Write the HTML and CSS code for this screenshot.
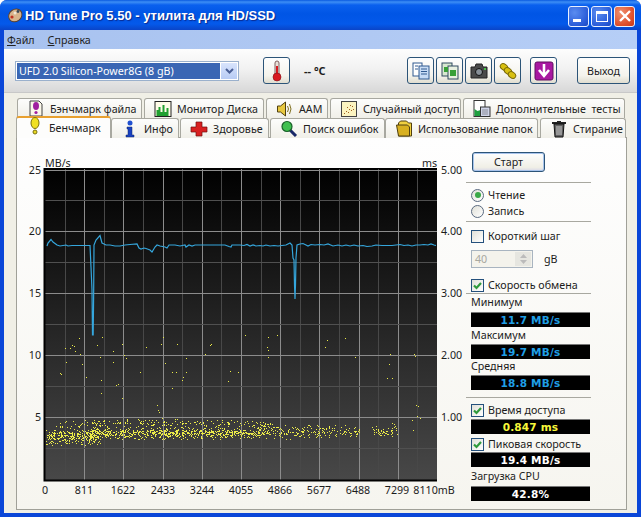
FILE: index.html
```html
<!DOCTYPE html>
<html lang="ru">
<head>
<meta charset="utf-8">
<title>HD Tune Pro 5.50</title>
<link rel="stylesheet" href="styles.css">
</head>
<body>
<div class="window">
  <header class="titlebar">
    <svg class="app-icon" width="16" height="16" viewBox="0 0 16 16"><ellipse cx="8" cy="8.5" rx="7" ry="6" fill="#d8b48c" stroke="#5a4030" transform="rotate(-35 8 8)"/><circle cx="5" cy="10" r="1.6" fill="#c03020"/><circle cx="8" cy="6" r="1.5" fill="#f0e8d8"/><circle cx="11" cy="4.5" r="1.4" fill="#384858"/></svg>
    <span class="title">HD Tune Pro 5.50 - утилита для HD/SSD</span>
    <div class="caption-btns">
      <span class="cap cap-min"><i class="cap-dash"></i></span>
      <span class="cap cap-max"><i class="cap-box"></i></span>
      <span class="cap cap-close"><svg width="14" height="14" viewBox="0 0 14 14"><path d="M2 2l10 10M12 2L2 12" stroke="#fff" stroke-width="2.4"/></svg></span>
    </div>
  </header>
  <div class="client">
    <nav class="menu"><span class="menu-item"><u>Ф</u>айл</span><span class="menu-item"><u>С</u>правка</span></nav>
    <div class="toolbar">
      <div class="combo"><span class="combo-value">UFD 2.0 Silicon-Power8G (8 gB)</span><span class="combo-arrow"><svg width="9" height="6" viewBox="0 0 9 6"><path d="M1 1l3.5 3.5L8 1" fill="none" stroke="#4a5f96" stroke-width="2"/></svg></span></div>
      <button class="tool tool-temp"><svg width="12" height="22" viewBox="0 0 12 22"><rect x="4" y="1" width="4" height="15" rx="2" fill="#e8e0d8" stroke="#806060"/><rect x="5" y="6" width="2" height="10" fill="#d81820"/><circle cx="6" cy="17" r="4" fill="#d81820" stroke="#801018" stroke-width=".6"/></svg></button>
      <span class="temp">-- °C</span>
      <div class="tool-group">
        <button class="tool"><svg width="18" height="18" viewBox="0 0 18 18"><rect x="1" y="1" width="9" height="13" fill="#fff" stroke="#305a90"/><rect x="7" y="4" width="10" height="13" fill="#c8dcf4" stroke="#305a90"/><path d="M9 7h6M9 9.500h6M9 12h6M3 4h3M3 7h3" stroke="#305a90"/></svg></button>
        <button class="tool"><svg width="18" height="18" viewBox="0 0 18 18"><rect x="1" y="1" width="10" height="13" fill="#d8e8d0" stroke="#304a60"/><rect x="7" y="4" width="10" height="13" fill="#e8f0e0" stroke="#304a60"/><rect x="3" y="5" width="4" height="5" fill="#38a038"/><rect x="9" y="8" width="6" height="6" fill="#38a038"/></svg></button>
        <button class="tool"><svg width="18" height="16" viewBox="0 0 18 16"><path d="M1 4h4l1-3h6l1 3h4v11H1z" fill="#4a4a4a" stroke="#222"/><circle cx="9" cy="9" r="3.500" fill="#889098" stroke="#111"/><rect x="14" y="5" width="2" height="2" fill="#48c048"/></svg></button>
        <button class="tool"><svg width="18" height="18" viewBox="0 0 18 18"><g fill="#d8c010" stroke="#7a6a08"><ellipse cx="5" cy="5" rx="4" ry="3" transform="rotate(35 5 5)"/><ellipse cx="9" cy="9" rx="4" ry="3" transform="rotate(35 9 9)"/><ellipse cx="13" cy="13" rx="4" ry="3" transform="rotate(35 13 13)"/></g></svg></button>
        <button class="tool tool-save"><svg width="20" height="20" viewBox="0 0 20 20"><rect x="1" y="1" width="18" height="18" rx="2" fill="#a818a0" stroke="#601060"/><path d="M10 3v10M5 9l5 6 5-6" fill="none" stroke="#fff" stroke-width="2.600"/></svg></button>
      </div>
      <button class="tool tool-exit">Выход</button>
    </div>
    <div class="tabs">
      <div class="tab-row">
        <div class="tab tab-file"><svg width="16" height="17" viewBox="0 0 16 17"><path d="M2 1h9l3 3v12H2z" fill="#fbf8ea" stroke="#444"/><ellipse cx="8" cy="6" rx="3" ry="4" fill="#a020a0"/><circle cx="8" cy="12.500" r="1.600" fill="#a020a0"/></svg>Бэнчмарк файла</div>
        <div class="tab tab-mon"><svg width="17" height="16" viewBox="0 0 17 16"><rect x=".5" y=".5" width="16" height="15" fill="#fffce8" stroke="#222"/><path d="M2 15V9h2V6h2v5h2V4h2v7h2V7h2v8z" fill="#20a030"/></svg>Монитор Диска</div>
        <div class="tab tab-aam"><svg width="17" height="16" viewBox="0 0 17 16"><path d="M1 5h3l5-4v14l-5-4H1z" fill="#e8c840" stroke="#504010"/><path d="M11 5q2 3 0 6M13 3q3 5 0 10" fill="none" stroke="#807020"/></svg>AAM</div>
        <div class="tab tab-rand"><svg width="16" height="16" viewBox="0 0 16 16"><rect x=".5" y=".5" width="15" height="15" fill="#fcf4c0" stroke="#444"/><path d="M3 12h1v1H3zM5 10h1v1H5zM7 11h1v1H7zM8 8h1v1H8zM10 9h1v1h-1zM11 5h1v1h-1zM12 8h1v1h-1zM6 6h1v1H6zM9 4h1v1H9z" fill="#a06020"/></svg>Случайный доступ</div>
        <div class="tab tab-extra"><svg width="17" height="17" viewBox="0 0 17 17"><rect x=".5" y=".5" width="11" height="16" fill="#fff" stroke="#333"/><path d="M1 16V9l3 2 3-1v6z" fill="#20a040"/><rect x="7" y="7" width="9.500" height="9.500" fill="#cfd4e8" stroke="#333"/><path d="M9 10h1M11 10h1M13 10h1M9 12h1M11 12h1M13 12h1M9 14h1M11 14h1M13 14h1" stroke="#444"/></svg>Дополнительные  тесты</div>
      </div>
      <div class="tab-row tab-row-front">
        <div class="tab tab-active tab-bench"><svg class="icon-shift" width="16" height="18" viewBox="0 0 16 18"><ellipse cx="8" cy="6" rx="4" ry="5.500" fill="#f0e020" stroke="#7a7010"/><circle cx="8" cy="15" r="2" fill="#e8d820" stroke="#7a7010"/></svg>Бенчмарк</div>
        <div class="tab tab-info"><svg width="16" height="18" viewBox="0 0 16 18"><circle cx="8" cy="3" r="2.500" fill="#2050d0"/><path d="M5 7h5v8h2v2H4v-2h2V9H5z" fill="#1840c0" stroke="#102868" stroke-width=".5"/></svg>Инфо</div>
        <div class="tab tab-health"><svg width="18" height="16" viewBox="0 0 18 16"><path d="M6 1h6v5h5v5h-5v4H6v-4H1V6h5z" fill="#d82020" stroke="#701010" stroke-width=".7"/></svg>Здоровье</div>
        <div class="tab tab-search"><svg width="18" height="17" viewBox="0 0 18 17"><path d="M10 10l6 6" stroke="#182868" stroke-width="3"/><circle cx="7" cy="6.500" r="5" fill="#40c050" stroke="#186028" stroke-width="1.200"/></svg>Поиск ошибок</div>
        <div class="tab tab-folder"><svg width="17" height="17" viewBox="0 0 17 17"><path d="M3 3l2-2h6l2 2h3v13H3z" fill="#f0d040" stroke="#504010"/><path d="M1 5h11l2 2v9H3z" fill="#d8b020" stroke="#504010"/></svg>Использование папок</div>
        <div class="tab tab-erase"><svg width="16" height="18" viewBox="0 0 16 18"><path d="M1 3h14" stroke="#222" stroke-width="2"/><path d="M6 1h4v2H6z" fill="#222"/><path d="M3 4h10l-1 13H4z" fill="#606060" stroke="#111"/><path d="M6 6v9M8 6v9M10 6v9" stroke="#ccc"/></svg>Стирание</div>
      </div>
    </div>
    <main class="panel">
      <svg id="chart" class="chart" width="449" height="371" viewBox="17 138 449 371">
        <defs><linearGradient id="plotbg" x1="0" y1="0" x2="0" y2="1"><stop offset="0" stop-color="#000"/><stop offset="1" stop-color="#484848"/></linearGradient></defs>
        <rect x="45" y="168" width="392" height="312" fill="url(#plotbg)"/>
        <g id="grid"></g>
        <path d="M44.500 168V480.500H437" fill="none" stroke="#000" stroke-width="2"/>
        <path d="M44 168.500H437" stroke="#000"/>
        <path id="dots" fill="#ecec48"/>
        <polyline fill="none" stroke="#35a6dc" stroke-width="1.200" points="47,246 48,243 51,239.500 53,242 57,245 60,246 66,245 68,246 72,245.500 90,245.500 91,267 92,290 92.500,335 93.200,335 93.700,290 94,245 96,240 100,235.500 102,243 104,244 106,245 110,245 115,246 120,246 125,245 130,244.500 137,244 139,248 141,249 144,248 146,248.500 150,250 152,252 155,247 157,245 160,246 165,247 167,248 169,245 175,245 180,246 185,245 186,247 189,245 192,246 195,245 225,245 229,246.500 231,247 232,245 236,245 240,245 244,245.500 247,244.500 250,246 253,245 256,246 260,245.500 263,246 266,245 270,246 274,245.500 278,246 282,245.500 286,245 290,243 292,245 293,258 294,260 294.500,285 295,299 295.500,285 296,258 297,245 300,244 303,243.500 306,245 308,246 311,244.500 315,245 320,244.500 324,245 328,244 333,246 338,245 342,246 346,245 350,246 354,245 358,246 363,245.500 367,246.500 372,246 376,245 382,245.500 392,245.500 396,245 400,244.500 404,245.500 408,245 412,246 416,245 420,245 424,244.500 428,245 431,244 434,245 436,245.500"/>
        <g class="axis">
          <text x="45" y="166.500">MB/s</text>
          <text x="422" y="166.500">ms</text>
          <g class="end">
            <text x="41" y="174">25</text><text x="41" y="235">20</text><text x="41" y="297">15</text><text x="41" y="359">10</text><text x="41" y="421">5</text>
          </g>
          <text x="441" y="174">5.00</text><text x="441" y="235">4.00</text><text x="441" y="297">3.00</text><text x="441" y="359">2.00</text><text x="441" y="421">1.00</text>
          <g class="mid">
            <text x="45" y="494">0</text><text x="84" y="494">811</text><text x="123" y="494">1622</text><text x="163" y="494">2433</text><text x="202" y="494">3244</text><text x="241" y="494">4055</text><text x="280" y="494">4866</text><text x="319" y="494">5677</text><text x="358" y="494">6488</text><text x="397" y="494">7299</text><text x="434" y="494">8110mB</text>
          </g>
        </g>
      </svg>
      <aside class="side">
        <button class="start">Старт</button>
        <hr class="rule rule-a">
        <label class="row row-first"><i class="radio radio-on"></i>Чтение</label>
        <label class="row"><i class="radio"></i>Запись</label>
        <hr class="rule rule-b">
        <label class="row row-short"><i class="check"></i>Короткий шаг</label>
        <div class="spin-row">
          <span class="spin"><span class="spin-val">40</span><span class="spin-btns"><svg width="7" height="4" viewBox="0 0 7 4"><path d="M0 4l3.500-4L7 4z" fill="#bbb"/></svg><svg width="7" height="4" viewBox="0 0 7 4"><path d="M0 0l3.500 4L7 0z" fill="#bbb"/></svg></span></span>
          <span class="unit">gB</span>
        </div>
        <label class="row row-rate"><i class="check check-on"><svg width="11" height="11" viewBox="0 0 11 11"><path d="M2 5.500l2.500 2.500L9 3" fill="none" stroke="#2f9a3c" stroke-width="2.200"/></svg></i>Скорость обмена</label>
        <hr class="rule rule-c">
        <div class="label label-first">Минимум</div>
        <div class="metric metric-blue">11.7 MB/s</div>
        <div class="label">Максимум</div>
        <div class="metric metric-blue metric-flush">19.7 MB/s</div>
        <div class="label label-flush">Средняя</div>
        <div class="metric metric-blue metric-flush">18.8 MB/s</div>
        <hr class="rule rule-d">
        <label class="row row-access"><i class="check check-on"><svg width="11" height="11" viewBox="0 0 11 11"><path d="M2 5.500l2.500 2.500L9 3" fill="none" stroke="#2f9a3c" stroke-width="2.200"/></svg></i>Время доступа</label>
        <div class="metric metric-yellow">0.847 ms</div>
        <label class="row row-peak"><i class="check check-on"><svg width="11" height="11" viewBox="0 0 11 11"><path d="M2 5.500l2.500 2.500L9 3" fill="none" stroke="#2f9a3c" stroke-width="2.200"/></svg></i>Пиковая скорость</label>
        <div class="metric metric-flush">19.4 MB/s</div>
        <div class="label label-cpu">Загрузка CPU</div>
        <div class="metric">42.8%</div>
      </aside>
    </main>
  </div>
</div>
<script src="chart.js"></script>
</body>
</html>
```
FILE: styles.css
```css
* { box-sizing: border-box; }
html, body { margin: 0; padding: 0; width: 641px; height: 517px; overflow: hidden; background: #fff; }
body { font-family: "Noto Sans", "Liberation Sans", sans-serif; font-size: 10.700px; color: #1c1c1c; }

.window { width: 641px; height: 517px; display: flex; flex-direction: column; background: #0a46d8; border-radius: 7px 7px 0 0; overflow: hidden; }

.titlebar { height: 30px; flex: none; display: flex; align-items: center; padding: 0 6px 0 7px; background: linear-gradient(#0a5ae0 0, #3d8ef5 2px, #0a60ee 5px, #0055e5 14px, #0459ea 24px, #0a44c8 30px); }
.app-icon { flex: none; margin-right: 2px; }
.title { font-family: "Liberation Sans", sans-serif; font-weight: 700; font-size: 13px; color: #fff; text-shadow: 1px 1px 1px #0a2a90; }
.caption-btns { margin-left: auto; display: flex; gap: 2px; padding-top: 2px; }
.cap { width: 21px; height: 21px; border: 1px solid #e8f0ff; border-radius: 3px; background: radial-gradient(circle at 30% 30%, #5a8cf0, #2a5cd8 70%, #1a48c0); display: flex; align-items: center; justify-content: center; }
.cap-close { background: radial-gradient(circle at 30% 30%, #f09070, #e0502c 65%, #c83818); }
.cap-dash { display: block; width: 8px; height: 3px; background: #fff; margin-top: 9px; margin-right: 4px; }
.cap-box { display: block; width: 12px; height: 11px; border: 1px solid #fff; border-top-width: 3px; }

.client { flex: 1; margin: 0 4px 4px; background: #f0efe6; display: flex; flex-direction: column; min-height: 0; }

.menu { height: 19px; flex: none; display: flex; align-items: center; padding-left: 3px; gap: 13px; background: linear-gradient(90deg, #a8c2ef, #b6cef6); }
.menu-item { color: #222; }

.toolbar { height: 44px; flex: none; display: flex; align-items: center; padding: 0 7px 0 11px; background: linear-gradient(#fdfdfd, #f2f2f2 45%, #d8d8d8); border-bottom: 1px solid #c8c8c8; }
.combo { width: 224px; height: 20px; border: 1px solid #9ab0cc; background: #fff; padding: 1px; display: flex; gap: 1px; }
.combo-value { flex: 1; background: #3a66b4; color: #fff; padding-left: 2px; line-height: 16px; white-space: nowrap; overflow: hidden; }
.combo-arrow { width: 16px; background: linear-gradient(#d8e4fc, #b8ccf4); display: flex; align-items: center; justify-content: center; }

.tool { width: 27px; height: 27px; padding: 0; border: 1px solid #2c5478; border-radius: 3px; background: linear-gradient(#fefefe, #f4f3ec 70%, #e0ddd0); display: flex; align-items: center; justify-content: center; font: inherit; color: #222; }
.tool-temp { margin-left: 24px; }
.temp { width: 117px; padding-left: 14px; font-weight: 700; font-size: 11px; flex: none; }
.tool-group { display: flex; gap: 2px; }
.tool-save { margin-left: 7px; }
.tool-exit { width: 53px; margin-left: 20px; }

.tabs { flex: none; height: 44px; padding: 5px 0 0 13px; }
.tab-row { display: flex; gap: 2px; height: 20px; }
.tab-row-front { height: 19px; gap: 0; margin-left: -1px; position: relative; z-index: 2; }
.tab { height: 20px; flex: none; display: flex; align-items: center; gap: 5px; padding-left: 9px; border: 1px solid #a8a8a0; border-bottom: 0; border-radius: 3px 3px 0 0; background: linear-gradient(#fdfdfc, #f0efe8); white-space: pre; color: #222; }
.tab svg { flex: none; width: 18px; }
.tab-file { width: 125px; }
.tab-mon { width: 120px; }
.tab-aam { width: 62px; }
.tab-rand { width: 131px; }
.tab-extra { width: 162px; }
.tab-row-front .tab { margin-top: 0; height: 20px; }
.tab-row-front .tab-active { height: 22px; margin-top: -2px; background: #fdfdfc; border-top: 2px solid #e8a030; }
.tab-bench { width: 95px; }
.tab-info { width: 68px; }
.tab-health { width: 89px; margin-left: 1px; }
.tab-search { width: 115px; margin-left: 1px; }
.tab-folder { width: 153px; }
.tab-erase { width: 86px; margin-left: 2px; }
.icon-shift { margin-top: -4px; }

.panel { margin: 0 10px 3px 12px; height: 373px; flex: none; display: flex; border: 1px solid #a0a098; background: linear-gradient(#fefefe, #f6f5ef); }
.chart { flex: none; display: block; }
.axis text { font-family: "Noto Sans", "Liberation Sans", sans-serif; font-size: 10.700px; fill: #1c1c1c; }
.axis .end text { text-anchor: end; }
.axis .mid text { text-anchor: middle; }

.side { flex: none; width: 125px; display: flex; flex-direction: column; align-items: flex-start; }
.start { margin: 14px 0 0 6px; width: 73px; height: 20px; padding: 0; border: 1px solid #2c5478; border-radius: 3px; background: linear-gradient(#fefefe, #f0efe6 80%, #d8d8e8); box-shadow: inset 0 0 0 1px #a8c4ec; font: inherit; color: #222; }
.rule { width: 125px; height: 1px; border: 0; margin: 0; background: #a8a8a0; flex: none; }
.rule-a { margin-top: 10px; }
.rule-b { margin-top: 2px; }
.rule-c { margin-top: 0; }
.rule-d { margin-top: 7px; }

.row { height: 16px; display: flex; align-items: center; gap: 4px; margin-left: 5px; flex: none; white-space: nowrap; }
.row-first { margin-top: 4px; }
.row-short { margin-top: 6px; }
.row-rate { margin-top: 9px; }
.row-access { margin-top: 4px; }
.row-peak { margin-top: 2px; }
.radio { width: 13px; height: 13px; border: 1px solid #5a6a80; border-radius: 50%; background: linear-gradient(135deg, #e0e0d8, #fff); display: flex; align-items: center; justify-content: center; flex: none; }
.radio-on::after { content: ""; width: 6px; height: 6px; border-radius: 50%; background: #3aa848; }
.check { width: 13px; height: 13px; border: 1px solid #24507c; background: linear-gradient(135deg, #e0e0d8, #fff); display: flex; align-items: center; justify-content: center; flex: none; }

.spin-row { margin: 6px 0 0 5px; height: 18px; display: flex; align-items: center; flex: none; }
.spin { width: 62px; height: 18px; border: 1px solid #a8b4c0; background: #f4f3ec; display: flex; align-items: center; justify-content: space-between; padding: 1px; color: #a8a8a0; }
.spin-val { padding-left: 2px; }
.spin-btns { width: 16px; height: 14px; background: #e6e6e0; display: flex; flex-direction: column; align-items: center; justify-content: center; gap: 2px; }
.unit { margin-left: 11px; }

.label { height: 16px; line-height: 15px; margin: 1px 0 0 5px; flex: none; white-space: nowrap; }
.label-flush { margin-top: 0; }
.label-cpu { margin-top: 2px; }
.metric { width: 119px; height: 15px; margin: 1px 0 0 5px; background: #000; border-top: 1px solid #777; display: flex; align-items: center; justify-content: center; font-family: "DejaVu Sans", sans-serif; font-weight: 700; font-size: 10.500px; letter-spacing: .2px; color: #fff; flex: none; }
.metric-flush { margin-top: 0; }
.metric-blue { color: #1f9fe6; }
.metric-yellow { color: #f8f83a; }
```
FILE: chart.js
```js
(function () {
  var NS = "http://www.w3.org/2000/svg";
  var grid = document.getElementById("grid");
  function line(x1, y1, x2, y2, color) {
    var l = document.createElementNS(NS, "line");
    l.setAttribute("x1", x1); l.setAttribute("y1", y1);
    l.setAttribute("x2", x2); l.setAttribute("y2", y2);
    l.setAttribute("stroke", color);
    grid.appendChild(l);
  }
  var i, x;
  for (i = 1; i < 20; i++) {
    x = Math.round(45 + i * 19.6) + 0.5;
    if (i % 2) line(x, 169, x, 479, "#484848");
    else line(x, 169, x, 480, "#8c8c8c");
  }
  [170, 231, 293, 355, 417].forEach(function (p) { line(45, p + 0.5, 437, p + 0.5, "#8c8c8c"); });
  [200, 262, 324, 386, 448].forEach(function (p) { line(45, p + 0.5, 437, p + 0.5, "#505050"); });

  var seed = 20240;
  function rnd() { seed = (seed * 1664525 + 1013904223) % 4294967296; return seed / 4294967296; }
  function gauss() { return (rnd() + rnd() + rnd()) / 1.5 - 1; }
  var d = "";
  function dot(px, py) { d += "M" + Math.round(px) + " " + Math.round(py) + "h1v1h-1z"; }

  for (i = 0; i < 300; i++) dot(46 + rnd() * 54, 436 + gauss() * 12);
  for (i = 0; i < 680; i++) dot(90 + rnd() * 170, 433 + gauss() * 8);
  for (i = 0; i < 170; i++) dot(60 + rnd() * 210, 423 + gauss() * 6);
  for (i = 0; i < 220; i++) dot(255 + rnd() * 105, 431 + gauss() * 10);
  for (i = 0; i < 50; i++) dot(372 + rnd() * 25, 431 + gauss() * 9);

  [[60,373],[61,374],[65,348],[66,362],[72,345],[75,351],[79,338],[80,354],[82,364],[86,377],[97,345],[100,357],[101,380],[101,393],[102,337],[113,351],[113,362],[116,385],[118,384],[122,344],[124,355],[126,358],[140,372],[146,347],[161,344],[163,337],[165,363],[172,372],[172,388],[176,372],[182,380],[183,377],[186,372],[186,358],[177,344],[205,354],[210,345],[228,381],[230,371],[238,372],[245,335],[268,337],[267,347],[268,357],[277,335],[325,347],[327,340],[345,338],[355,357],[390,354],[389,364],[387,378],[414,354],[416,405],[417,416],[412,420],[413,430],[420,418],[157,405],[158,410],[159,412],[70,348],[74,346],[122,398],[211,344],[268,350],[392,378],[415,356],[418,406]].forEach(function (p) { dot(p[0], p[1]); });

  document.getElementById("dots").setAttribute("d", d);
})();
```
